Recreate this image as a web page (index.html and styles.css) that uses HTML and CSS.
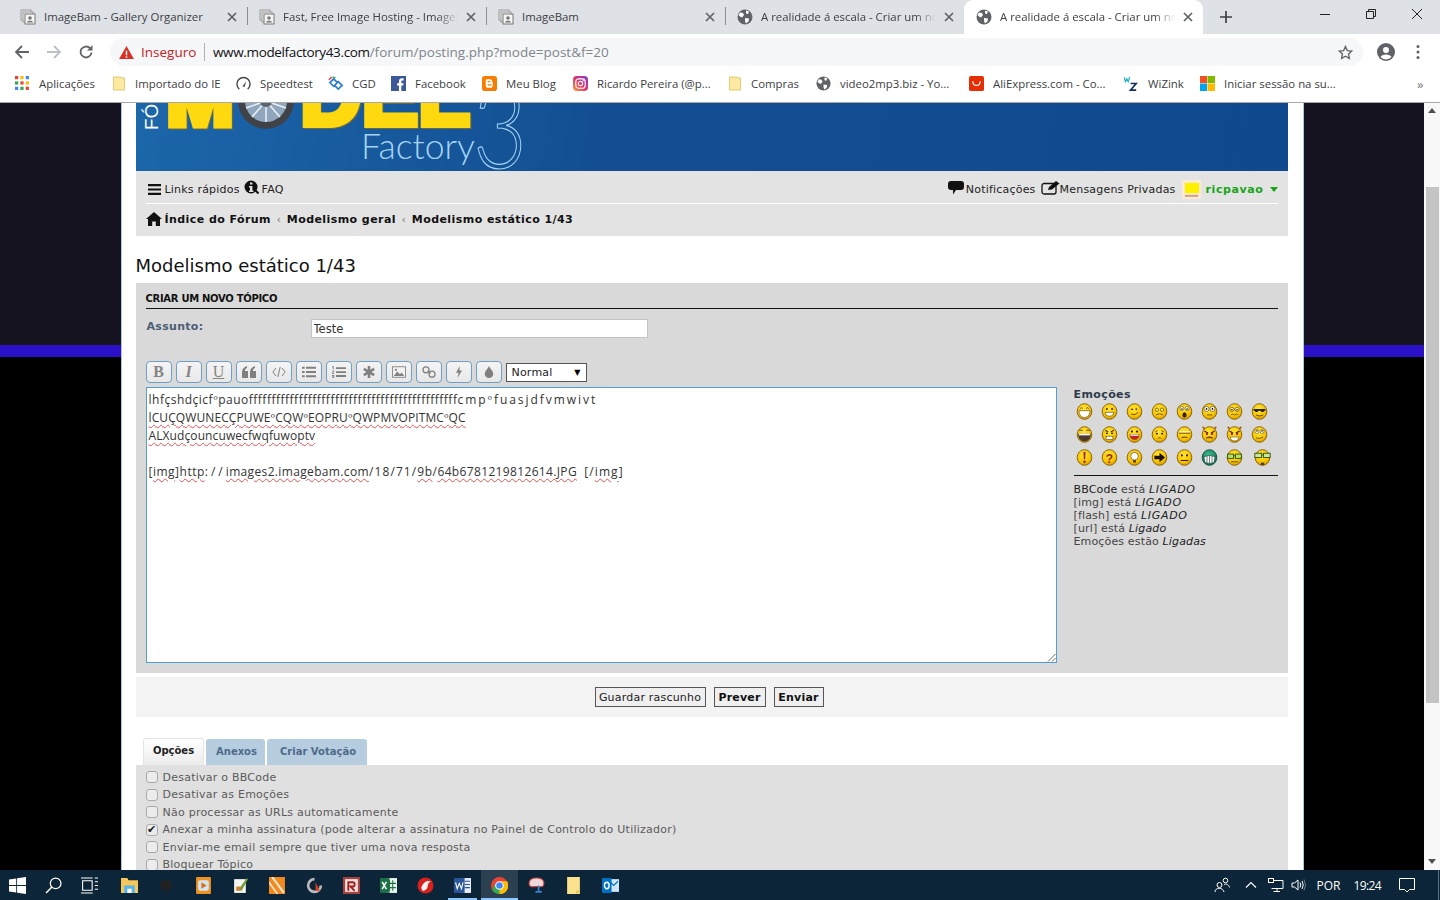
FILE: index.html
```html
<!DOCTYPE html>
<html lang="pt">
<head>
<meta charset="utf-8">
<title>Criar um novo tópico</title>
<link rel="stylesheet" href="styles.css">
</head>
<body>
<svg class="defs" width="0" height="0" aria-hidden="true">
  <defs>
    <radialGradient id="yel" cx="45%" cy="35%" r="70%">
      <stop offset="0" stop-color="#ffe83a"/><stop offset=".65" stop-color="#f8c400"/><stop offset="1" stop-color="#c98a00"/>
    </radialGradient>
    <radialGradient id="grn" cx="45%" cy="35%" r="70%">
      <stop offset="0" stop-color="#3fbf8a"/><stop offset="1" stop-color="#0c6a50"/>
    </radialGradient>
    <symbol id="f" viewBox="0 0 20 20"><ellipse cx="10" cy="10" rx="8.6" ry="9.2" fill="url(#yel)" stroke="#8a6200" stroke-width="1.1"/></symbol>
    <symbol id="globe" viewBox="0 0 16 16"><circle cx="8" cy="8" r="7.5" fill="#5f6368"/><path d="M3 3.500l3 .5 1 2-2 2.500-2-1L1.500 6zM9 1.500l3 1-1 2.500-2-.5zM8 9l4 .5-.5 3-2.500 2-1-2.500z" fill="#fff"/></symbol>
    <symbol id="docs" viewBox="0 0 16 16"><rect x="1" y="1" width="10" height="10" fill="#e8e8e8" stroke="#9a9a9a"/><rect x="3" y="3" width="10" height="10" fill="#eee" stroke="#9a9a9a"/><rect x="5" y="5" width="10" height="10" fill="#f6f6f6" stroke="#777"/><circle cx="10" cy="9" r="1.800" fill="#777"/><path d="M7 13.500c0-2.500 6-2.500 6 0z" fill="#777"/></symbol>
    <symbol id="x" viewBox="0 0 10 10"><path d="M1 1l8 8M9 1l-8 8" stroke="#5f6368" stroke-width="1.700" fill="none"/></symbol>
    <symbol id="folder" viewBox="0 0 13 15"><path d="M.5.500h8l1 1h3v13H.500z" fill="#fdeaa0" stroke="#e2c66a"/></symbol>
  </defs>
</svg>

<header class="chrome">
  <div class="tabstrip">
    <div class="tab"><svg class="fav"><use href="#docs"/></svg><span class="tab-title short">ImageBam - Gallery Organizer</span><svg class="tab-x"><use href="#x"/></svg></div>
    <div class="tab sep"><svg class="fav"><use href="#docs"/></svg><span class="tab-title">Fast, Free Image Hosting - ImageBam</span><svg class="tab-x"><use href="#x"/></svg></div>
    <div class="tab sep"><svg class="fav"><use href="#docs"/></svg><span class="tab-title short">ImageBam</span><svg class="tab-x"><use href="#x"/></svg></div>
    <div class="tab sep"><svg class="fav"><use href="#globe"/></svg><span class="tab-title">A realidade á escala - Criar um novo tópico</span><svg class="tab-x"><use href="#x"/></svg></div>
    <div class="tab active"><svg class="fav"><use href="#globe"/></svg><span class="tab-title">A realidade á escala - Criar um novo tópico</span><svg class="tab-x"><use href="#x"/></svg></div>
    <svg class="newtab" viewBox="0 0 12 12"><path d="M6 0v12M0 6h12" stroke="#3c4043" stroke-width="1.700"/></svg>
    <div class="winctl">
      <svg viewBox="0 0 12 12"><path d="M1 6.500h10" stroke="#222"/></svg>
      <svg viewBox="0 0 12 12"><path d="M1.500 3.500h7v7h-7zM3.500 3.500v-2h7v7h-2" fill="none" stroke="#222"/></svg>
      <svg viewBox="0 0 12 12"><path d="M1 1l10 10M11 1L1 11" stroke="#222" fill="none"/></svg>
    </div>
  </div>
  <div class="toolbar">
    <svg class="nav-ic" viewBox="0 0 16 16"><path d="M15 8H2M8 2L2 8l6 6" fill="none" stroke="#5f6368" stroke-width="1.800"/></svg>
    <svg class="nav-ic" viewBox="0 0 16 16"><path d="M1 8h13M8 2l6 6-6 6" fill="none" stroke="#bdc1c6" stroke-width="1.800"/></svg>
    <svg class="nav-ic" viewBox="0 0 16 16"><path d="M13.500 8.500A5.500 5.500 0 1 1 12 4.200" fill="none" stroke="#5f6368" stroke-width="1.800"/><path d="M14.500 1v5.500H9z" fill="#5f6368"/></svg>
    <div class="omnibox">
      <svg class="warn" viewBox="0 0 16 14"><path d="M8 0l8 14H0z" fill="#d93025"/><path d="M7.200 5h1.600v5H7.200zM7.200 11h1.600v1.600H7.200z" fill="#fff"/></svg>
      <span class="insecure">Inseguro</span>
      <span class="url"><span class="host">www.modelfactory43.com</span>/forum/posting.php?mode=post&amp;f=20</span>
      <svg class="star" viewBox="0 0 16 16"><path d="M8 1.500l2 4.400 4.700.5-3.500 3.200 1 4.700L8 11.900l-4.200 2.400 1-4.700L1.300 6.400 6 5.900z" fill="none" stroke="#5f6368" stroke-width="1.400"/></svg>
    </div>
    <svg class="profile" viewBox="0 0 18 18"><circle cx="9" cy="9" r="9" fill="#5f6368"/><circle cx="9" cy="7" r="3" fill="#fff"/><path d="M3.500 14c1-3.500 10-3.500 11 0a7.500 7.500 0 0 1-11 0z" fill="#fff"/></svg>
    <svg class="kebab" viewBox="0 0 4 16"><circle cx="2" cy="2.500" r="1.500" fill="#5f6368"/><circle cx="2" cy="8" r="1.500" fill="#5f6368"/><circle cx="2" cy="13.500" r="1.500" fill="#5f6368"/></svg>
  </div>
  <div class="bookmarks">
    <div class="bm"><svg viewBox="0 0 14 14"><g><rect width="3" height="3" fill="#ea4335"/><rect x="5" width="3" height="3" fill="#fbbc05"/><rect x="10" width="3" height="3" fill="#4285f4"/><rect y="5" width="3" height="3" fill="#34a853"/><rect x="5" y="5" width="3" height="3" fill="#ea4335"/><rect x="10" y="5" width="3" height="3" fill="#fbbc05"/><rect y="10" width="3" height="3" fill="#4285f4"/><rect x="5" y="10" width="3" height="3" fill="#34a853"/><rect x="10" y="10" width="3" height="3" fill="#ea4335"/></g></svg><span>Aplicações</span></div>
    <div class="bm"><svg class="bm-folder"><use href="#folder"/></svg><span>Importado do IE</span></div>
    <div class="bm"><svg viewBox="0 0 16 16"><path d="M3.500 14a7 7 0 1 1 9 0" fill="none" stroke="#444" stroke-width="1.500"/><path d="M7 11l4-5.500-2 6.500z" fill="#444"/></svg><span>Speedtest</span></div>
    <div class="bm"><svg viewBox="0 0 16 16"><path d="M2 7l4-4 4 4-4 4zM7 10l4-4 4 4-4 4z" fill="none" stroke="#2f7fc8" stroke-width="1.800"/><path d="M1 4l3-3" stroke="#e33" stroke-width="1.500"/><path d="M5 1l3 1" stroke="#2a6" stroke-width="1.500"/></svg><span>CGD</span></div>
    <div class="bm"><svg viewBox="0 0 16 16"><rect width="16" height="16" fill="#3b5998"/><path d="M11 16v-6h2l.4-2.400H11V6c0-.8.300-1.200 1.200-1.200h1.300V2.600C13 2.500 12.400 2.500 11.700 2.500 9.800 2.500 8.500 3.600 8.500 5.700v1.900h-2V10h2v6z" fill="#fff"/></svg><span>Facebook</span></div>
    <div class="bm"><svg viewBox="0 0 16 16"><rect width="16" height="16" rx="3" fill="#f57d00"/><path d="M5.500 3.500h3c1.500 0 2.500 1 2.500 2.500v1h.5v3c0 1.500-1 2.500-2.500 2.500H6.500C5 12.500 4 11.500 4 10V5c0-1 .5-1.500 1.500-1.500z" fill="#fff"/><path d="M6 6h3M6 9.500h4" stroke="#f57d00" stroke-width="1.200"/></svg><span>Meu Blog</span></div>
    <div class="bm"><svg viewBox="0 0 16 16"><defs><linearGradient id="ig" x1="0" y1="1" x2="1" y2="0"><stop offset="0" stop-color="#f9a13a"/><stop offset=".5" stop-color="#e1306c"/><stop offset="1" stop-color="#7a3fd0"/></linearGradient></defs><rect width="16" height="16" rx="4" fill="url(#ig)"/><rect x="3" y="3" width="10" height="10" rx="3" fill="none" stroke="#fff" stroke-width="1.200"/><circle cx="8" cy="8" r="2.300" fill="none" stroke="#fff" stroke-width="1.200"/><circle cx="11" cy="5" r=".7" fill="#fff"/></svg><span>Ricardo Pereira (@p...</span></div>
    <div class="bm"><svg class="bm-folder"><use href="#folder"/></svg><span>Compras</span></div>
    <div class="bm"><svg viewBox="0 0 16 16"><use href="#globe"/></svg><span>video2mp3.biz - Yo...</span></div>
    <div class="bm"><svg viewBox="0 0 16 16"><rect width="16" height="16" rx="2" fill="#e62e04"/><path d="M4 5.500c0 6 8 6 8 0" fill="none" stroke="#fff" stroke-width="1.300"/></svg><span>AliExpress.com - Co...</span></div>
    <div class="bm"><svg viewBox="0 0 16 16"><path d="M0 1l1.500 5L3 3l1.500 3L6 1" fill="none" stroke="#18b6c8" stroke-width="1.300"/><path d="M7 8h6l-6 7h6" fill="none" stroke="#14305c" stroke-width="1.800"/></svg><span>WiZink</span></div>
    <div class="bm"><svg viewBox="0 0 16 16"><rect width="7.500" height="7.500" fill="#f25022"/><rect x="8" width="8" height="7.500" fill="#7fba00"/><rect y="8" width="7.500" height="8" fill="#00a4ef"/><rect x="8" y="8" width="8" height="8" fill="#ffb900"/></svg><span>Iniciar sessão na su...</span></div>
    <div class="bm more">»</div>
  </div>
</header>

<div class="app">
  <main class="viewport">
    <div class="wrap">
      <div class="logo">
        <svg viewBox="0 0 1152 68" width="1152" height="68">
          <text class="logo-forum" transform="translate(22 27) rotate(-90)">FÓRUM</text>
          <text class="logo-model logo-m" x="31" y="21" textLength="66" lengthAdjust="spacingAndGlyphs">M</text>
          <circle cx="130" cy="-2" r="28" fill="#3f4348"/>
          <circle cx="130" cy="-2" r="21" fill="#8fa6bd"/>
          <g stroke="#e8eef4" stroke-width="1.600"><path d="M130 -2L130 19M130 -2L116 14M130 -2L144 14M130 -2L110 5M130 -2L150 5"/></g>
          <circle cx="130" cy="-2" r="6" fill="#5b6470"/>
          <text class="logo-model" x="164" y="22" textLength="170" lengthAdjust="spacingAndGlyphs">DEL</text>
          <text class="logo-three" x="337" y="65" textLength="54" lengthAdjust="spacingAndGlyphs">3</text>
          <text class="logo-factory" x="225" y="56" textLength="114" lengthAdjust="spacingAndGlyphs">Factory</text>
        </svg>
      </div>

      <nav class="navbar">
        <div class="nav-top">
          <div class="nav-group">
            <svg class="ico" viewBox="0 0 13 11"><path d="M0 0h13v2.200H0zM0 4.400h13v2.200H0zM0 8.800h13V11H0z" fill="#111"/></svg>
            <span class="nav-link">Links rápidos</span>
            <svg class="ico ico-info" viewBox="0 0 15 15"><circle cx="7" cy="7" r="6.500" fill="#111"/><path d="M6 2.500h2.400v2H6zM5 6h3.400v4.500h1V12H5v-1.500h1V7.500H5z" fill="#e2e2e2"/><path d="M11 10l3.500 3.500" stroke="#111" stroke-width="2"/></svg>
            <span class="nav-link">FAQ</span>
          </div>
          <div class="nav-group">
            <svg class="ico ico-bubble" viewBox="0 0 16 14"><path d="M3 0h10a3 3 0 0 1 3 3v3a3 3 0 0 1-3 3H8l-3 4.500V9H3a3 3 0 0 1-3-3V3a3 3 0 0 1 3-3z" fill="#111"/></svg>
            <span class="nav-link">Notificações</span>
            <svg class="ico ico-mail" viewBox="0 0 19 14"><rect x="1" y="2.500" width="14" height="10.500" rx="2" fill="none" stroke="#111" stroke-width="1.300"/><path d="M7 9l1-3 7-6 3.500 2.500-7.500 6z" fill="#111"/></svg>
            <span class="nav-link nav-pm">Mensagens Privadas</span>
            <svg class="avatar" viewBox="0 0 20 20"><rect width="20" height="20" fill="#f6ecd8"/><rect x="3" y="3" width="15" height="11" fill="#fff000"/><rect x="3" y="16" width="14" height="1.500" fill="#d98060"/></svg>
            <span class="username">ricpavao</span>
            <span class="caret"></span>
          </div>
        </div>
        <div class="crumbs">
          <svg class="ico ico-home" viewBox="0 0 16 14"><path d="M8 0l8 7h-2v7H9.800V9.500H6.200V14H2V7H0z" fill="#111"/></svg>
          <span>Índice do Fórum</span><i>‹</i><span>Modelismo geral</span><i>‹</i><span>Modelismo estático 1/43</span>
        </div>
      </nav>

      <h2 class="title">Modelismo estático 1/43</h2>

      <form class="panel">
        <h3 class="legend">CRIAR UM NOVO TÓPICO</h3>
        <div class="subject">
          <label class="subject-label" for="subj">Assunto:</label>
          <input class="subject-input" id="subj" type="text" value="Teste">
        </div>
        <div class="format">
          <button type="button" class="fb fb-b">B</button>
          <button type="button" class="fb fb-i">I</button>
          <button type="button" class="fb fb-u">U</button>
          <button type="button" class="fb"><svg viewBox="0 0 14 12"><path d="M0 6c0-3 2-5 5-6v2C3.500 2.500 3 3.500 3 5h3v7H0zM8 6c0-3 2-5 5-6v2c-1.500.5-2 1.500-2 3h3v7H8z" fill="#808080"/></svg></button>
          <button type="button" class="fb"><svg viewBox="0 0 14 10"><path d="M4 1L.8 5 4 9M10 1l3.200 4L10 9M8.200 0L5.800 10" fill="none" stroke="#808080" stroke-width="1"/></svg></button>
          <button type="button" class="fb"><svg viewBox="0 0 16 12"><path d="M0 0h3v2.200H0zM0 4.800h3V7H0zM0 9.700h3V12H0zM4.500 0H16v2.200H4.500zM4.500 4.800H16V7H4.500zM4.500 9.700H16V12H4.500z" fill="#808080"/></svg></button>
          <button type="button" class="fb"><svg viewBox="0 0 16 13"><path d="M0 0h2v3.500H1V1H0zM0 5h2.500v1L1 7.500h1.500V8.500H0v-1L1.500 6H0zM0 10h2.500v3H0v-1h1.500v-.3H.6v-.7h.9V11H0zM4.500 1H16v2.200H4.500zM4.500 5.500H16v2.200H4.500zM4.500 10H16v2.200H4.500z" fill="#808080"/></svg></button>
          <button type="button" class="fb"><svg viewBox="0 0 14 14"><path d="M5.500 0h3v4.400L12.300 2l1.500 2.600L10 7l3.800 2.400-1.500 2.600-3.800-2.400V14h-3V9.600L1.700 12 .2 9.400 4 7 .2 4.600 1.700 2l3.800 2.400z" fill="#808080"/></svg></button>
          <button type="button" class="fb"><svg viewBox="0 0 16 13"><rect x=".5" y=".5" width="15" height="12" fill="#f2f2f2" stroke="#808080"/><path d="M2 11l4-5 3 3 2-2 3 4z" fill="#808080"/><circle cx="4.500" cy="4" r="1.300" fill="#808080"/></svg></button>
          <button type="button" class="fb"><svg viewBox="0 0 16 14"><circle cx="4.500" cy="4.500" r="3.500" fill="none" stroke="#808080" stroke-width="1.500"/><circle cx="11.500" cy="9.500" r="3.500" fill="none" stroke="#808080" stroke-width="1.500"/><path d="M6 6.500l4 2" stroke="#808080" stroke-width="1.500"/></svg></button>
          <button type="button" class="fb"><svg viewBox="0 0 10 16"><path d="M6 0L1 9h3.500L3 16l6-10H5.500z" fill="#808080"/></svg></button>
          <button type="button" class="fb"><svg viewBox="0 0 10 14"><path d="M5 0c1 3 5 6 5 9a5 5 0 0 1-10 0c0-3 4-6 5-9z" fill="#808080"/></svg></button>
          <div class="sizebox"><span>Normal</span><span class="sizearrow">▼</span></div>
        </div>
        <div class="editor">
          <div class="msg">
            <p>lhfçshdçicfºpauoffffffffffffffffffffffffffffffffffffffffffffff<span class="tail">cmpºfuasjdfvmwivt</span></p>
            <p class="tight"><span class="sp">lCUÇQWUNECÇPUWEºCQWºEOPRUºQWPMVOPITMCºQC</span></p>
            <p class="tight"><span class="sp">ALXudçouncuwecfwqfuwoptv</span></p>
            <p>&nbsp;</p>
            <p>[<span class="sp">img</span>]<span class="sp">http</span><span class="wide">://</span><span class="sp host-sp">images2.imagebam.com</span><span class="path">/18/71/</span><span class="sp">9b</span>/<span class="sp host-sp">64b6781219812614.JPG</span>&nbsp;&nbsp;<span class="end">[/<span class="sp">img</span>]</span></p>
            <svg class="grip" viewBox="0 0 9 9"><path d="M8.500 1L1 8.500M8.500 5L5 8.500" stroke="#666" fill="none"/></svg>
          </div>
          <aside class="side">
            <div class="side-title">Emoções</div>
            <div class="smilies">
              <svg viewBox="0 0 20 20"><use href="#f"/><path d="M3.500 9h13c0 5-3 8-6.500 8S3.500 14 3.500 9z" fill="#fff" stroke="#5a3d00" stroke-width=".7"/><path d="M5 6.500q1.500-2 3 0M12 6.500q1.500-2 3 0" fill="none" stroke="#5a3d00"/></svg>
              <svg viewBox="0 0 20 20"><use href="#f"/><circle cx="7" cy="7" r="1.200" fill="#4a3000"/><circle cx="13" cy="7" r="1.200" fill="#4a3000"/><path d="M5 11h10c0 3-2 4.500-5 4.500S5 14 5 11z" fill="#fff" stroke="#5a3d00" stroke-width=".7"/></svg>
              <svg viewBox="0 0 20 20"><use href="#f"/><path d="M6 7.500h2.500M12 6v2.500" stroke="#4a3000" stroke-width="1.200"/><path d="M6 13q5 2.500 8-2" fill="none" stroke="#5a3d00"/></svg>
              <svg viewBox="0 0 20 20"><use href="#f"/><circle cx="7" cy="8" r="2" fill="#ffe860" stroke="#4a3000" stroke-width=".7"/><circle cx="13" cy="8" r="2" fill="#ffe860" stroke="#4a3000" stroke-width=".7"/><path d="M6 14q4-3 8 0" fill="none" stroke="#5a3d00"/></svg>
              <svg viewBox="0 0 20 20"><use href="#f"/><ellipse cx="7" cy="6.500" rx="2.200" ry="2.500" fill="#fff" stroke="#4a3000" stroke-width=".6"/><ellipse cx="13" cy="6.500" rx="2.200" ry="2.500" fill="#fff" stroke="#4a3000" stroke-width=".6"/><circle cx="7" cy="7" r=".9"/><circle cx="13" cy="7" r=".9"/><ellipse cx="10" cy="14" rx="2.500" ry="3" fill="#3c2000"/></svg>
              <svg viewBox="0 0 20 20"><use href="#f"/><circle cx="6.500" cy="7" r="3" fill="#fff" stroke="#4a3000" stroke-width=".7"/><circle cx="13.500" cy="7" r="3" fill="#fff" stroke="#4a3000" stroke-width=".7"/><circle cx="6.500" cy="7" r="1"/><circle cx="13.500" cy="7" r="1"/><path d="M7 14h6" stroke="#5a3d00"/></svg>
              <svg viewBox="0 0 20 20"><use href="#f"/><circle cx="7" cy="7.500" r="2.500" fill="#ffeb9a" stroke="#4a3000" stroke-width=".7"/><circle cx="13" cy="7.500" r="2.500" fill="#ffeb9a" stroke="#4a3000" stroke-width=".7"/><circle cx="7" cy="8" r=".8"/><circle cx="13" cy="8" r=".8"/><path d="M6 14l2-1 2 1 2-1 2 1" fill="none" stroke="#5a3d00" stroke-width=".9"/></svg>
              <svg viewBox="0 0 20 20"><use href="#f"/><path d="M3 7h14v2h-1.500l-1 1.500h-2L11 9H9l-1.500 1.500h-2l-1-1.500H3z" fill="#222"/><path d="M6 14q4 2.500 8 0" fill="none" stroke="#5a3d00" stroke-width="1.200"/></svg>

              <svg viewBox="0 0 20 20"><use href="#f"/><path d="M4 5.500q2-1.500 4 0M12 5.500q2-1.500 4 0" fill="none" stroke="#4a3000"/><path d="M2.500 9h15c0 6-3.500 9-7.500 9S2.500 15 2.500 9z" fill="#4a3a30"/><path d="M3.500 9h13v2h-13z" fill="#fff"/></svg>
              <svg viewBox="0 0 20 20"><use href="#f"/><path d="M5 5l3.500 2M15 5l-3.500 2" stroke="#4a3000" stroke-width="1.200"/><circle cx="7" cy="8.500" r="1"/><circle cx="13" cy="8.500" r="1"/><rect x="6" y="12" width="8" height="4" fill="#fff" stroke="#5a3d00" stroke-width=".7"/></svg>
              <svg viewBox="0 0 20 20"><use href="#f"/><circle cx="7" cy="6.500" r="1.300" fill="#3c2000"/><circle cx="13" cy="6.500" r="1.300" fill="#3c2000"/><path d="M4.500 10h11c0 4-2.500 6-5.500 6s-5.500-2-5.500-6z" fill="#c8202a" stroke="#5a3d00" stroke-width=".6"/><path d="M5 10h10v1.500H5z" fill="#fff"/></svg>
              <svg viewBox="0 0 20 20"><use href="#f"/><path d="M5 7l2.500-1.500M15 7l-2.500-1.500" stroke="#4a3000"/><circle cx="7" cy="9" r="1"/><circle cx="13" cy="9" r="1"/><path d="M8 14.500q2-1.500 4 0" fill="none" stroke="#5a3d00"/></svg>
              <svg viewBox="0 0 20 20"><use href="#f"/><path d="M3.500 7h13" stroke="#fff2b0" stroke-width="2"/><path d="M3.500 8.500h13" stroke="#7a5500" stroke-width="1.200"/><path d="M6.500 14q3.500-2 7 0" fill="none" stroke="#5a3d00" stroke-width="1.200"/></svg>
              <svg viewBox="0 0 20 20"><path d="M2 1l3.500 3.500M18 1l-3.500 3.500" stroke="#b05a10" stroke-width="2"/><use href="#f"/><path d="M4 6l4.500 2.500M16 6l-4.500 2.500" stroke="#3c2000" stroke-width="1.300"/><circle cx="7" cy="9.500" r="1.300" fill="#b01010"/><circle cx="13" cy="9.500" r="1.300" fill="#b01010"/><path d="M6 14.500q4-3 8 0" stroke="#5a3d00" stroke-width="1.300" fill="#c03020"/></svg>
              <svg viewBox="0 0 20 20"><path d="M2 1l3.500 3.500M18 1l-3.500 3.500" stroke="#b05a10" stroke-width="2"/><use href="#f"/><path d="M4 6l4.500 2.500M16 6l-4.500 2.500" stroke="#3c2000" stroke-width="1.300"/><circle cx="7" cy="9.500" r="1.300" fill="#b01010"/><circle cx="13" cy="9.500" r="1.300" fill="#b01010"/><path d="M5 13h10c0 3-2 4.500-5 4.500S5 16 5 13z" fill="#fff" stroke="#5a3d00" stroke-width=".6"/></svg>
              <svg viewBox="0 0 20 20"><use href="#f"/><circle cx="7" cy="6.500" r="2.300" fill="#fff" stroke="#4a3000" stroke-width=".6"/><circle cx="13" cy="6.500" r="2.300" fill="#fff" stroke="#4a3000" stroke-width=".6"/><circle cx="7" cy="6" r=".9"/><circle cx="13" cy="6" r=".9"/><path d="M6 14q4 2 8-1" fill="none" stroke="#5a3d00"/></svg>

              <svg viewBox="0 0 20 20"><use href="#f"/><path d="M8.800 3.500h2.400l-.4 8.500H9.200z" fill="#a02000"/><circle cx="10" cy="15" r="1.500" fill="#a02000"/></svg>
              <svg viewBox="0 0 20 20"><use href="#f"/><text class="sm-q" x="10" y="16" text-anchor="middle">?</text></svg>
              <svg viewBox="0 0 20 20"><use href="#f"/><circle cx="10" cy="8.500" r="4.500" fill="#fff" stroke="#4a3000" stroke-width=".7"/><rect x="8.500" y="13" width="3" height="3" fill="#4a3000"/></svg>
              <svg viewBox="0 0 20 20"><use href="#f"/><path d="M4 8h6V4.500l6.500 5.500-6.500 5.500V12H4z" fill="#1a1000"/></svg>
              <svg viewBox="0 0 20 20"><use href="#f"/><circle cx="7" cy="7.500" r="1.200" fill="#3c2000"/><circle cx="13" cy="7.500" r="1.200" fill="#3c2000"/><path d="M5.500 13.500h9" stroke="#3c2000" stroke-width="1.200"/></svg>
              <svg viewBox="0 0 20 20"><ellipse cx="10" cy="10" rx="8.600" ry="9.200" fill="url(#grn)" stroke="#0a4a3a"/><path d="M3.500 9q6.500-3 13 0l-1 7q-5.500 2-11 0z" fill="#fff" stroke="#063028" stroke-width=".7"/><path d="M7 8v9M10 8v9M13 8v9" stroke="#063028" stroke-width=".7"/></svg>
              <svg viewBox="0 0 20 20"><use href="#f"/><rect x="2" y="6" width="7" height="5" fill="#b6e36a" stroke="#2a4a00"/><rect x="11" y="6" width="7" height="5" fill="#b6e36a" stroke="#2a4a00"/><path d="M9 8h2" stroke="#2a4a00"/><path d="M6 15h8" stroke="#5a3d00"/></svg>
              <svg class="sm-last" viewBox="0 0 20 20"><use href="#f"/><rect x="1" y="5" width="8" height="5" fill="#c8e8a0" stroke="#2a4a00"/><rect x="11" y="5" width="8" height="5" fill="#c8e8a0" stroke="#2a4a00"/><path d="M9 7h2" stroke="#2a4a00"/><path d="M8 16h4v3H8z" fill="#5a4020"/></svg>
            </div>
            <div class="status">
              <div><span class="st-k">BBCode</span> está <em class="caps">LIGADO</em></div>
              <div>[img] está <em class="caps">LIGADO</em></div>
              <div>[flash] está <em class="caps">LIGADO</em></div>
              <div>[url] está <em>Ligado</em></div>
              <div>Emoções estão <em>Ligadas</em></div>
            </div>
          </aside>
        </div>
      </form>

      <div class="submit">
        <button type="button" class="btn btn-draft">Guardar rascunho</button>
        <button type="button" class="btn btn-strong btn-prev">Prever</button>
        <button type="button" class="btn btn-strong btn-send">Enviar</button>
      </div>

      <div class="tabs">
        <div class="ftab ftab-on">Opções</div>
        <div class="ftab ftab-a">Anexos</div>
        <div class="ftab ftab-v">Criar Votação</div>
      </div>
      <div class="options">
        <label class="opt"><input type="checkbox">Desativar o BBCode</label>
        <label class="opt"><input type="checkbox">Desativar as Emoções</label>
        <label class="opt"><input type="checkbox">Não processar as URLs automaticamente</label>
        <label class="opt"><input type="checkbox" checked>Anexar a minha assinatura (pode alterar a assinatura no Painel de Controlo do Utilizador)</label>
        <label class="opt"><input type="checkbox">Enviar-me email sempre que tiver uma nova resposta</label>
        <label class="opt"><input type="checkbox">Bloquear Tópico</label>
      </div>
    </div>
  </main>
  <div class="scrollbar">
    <span class="sb-up"></span>
    <div class="sb-thumb"></div>
    <span class="sb-down"></span>
  </div>
</div>

<footer class="taskbar">
  <div class="tb-left">
    <div class="tb-i tb-narrow"><svg viewBox="0 0 16 16"><path d="M0 2.300l6.800-1v6.300H0zM7.600 1.200L16 0v7.600H7.600zM0 8.400h6.800v6.300L0 13.700zM7.600 8.400H16V16l-8.400-1.200z" fill="#fff"/></svg></div>
    <div class="tb-i"><svg viewBox="0 0 16 16"><circle cx="10" cy="6" r="5" fill="none" stroke="#fff" stroke-width="1.200"/><path d="M6.500 9.500L1 15" stroke="#fff" stroke-width="1.400"/></svg></div>
    <div class="tb-i tb-narrow tb-gap"><svg viewBox="0 0 16 16"><path d="M1.500 3.500h9v9h-9zM0 1h11M0 15h11M13 1h3M13 4.500h3M13 8h3M13 11.500h3" fill="none" stroke="#fff"/></svg></div>
    <div class="tb-i"><svg viewBox="0 0 16 16"><path d="M0 1h6l1 2h9v12H0z" fill="#f4c85a"/><path d="M3 8h10v7H3z" fill="#5ab4e8"/><path d="M6 11h4v4H6z" fill="#fff"/></svg></div>
    <div class="tb-i"><svg viewBox="0 0 16 16"><path d="M3 2l3 2 2-2 2 2 3-1-1 4 2 2-3 1 0 4-3-2-2 2-1-3-3 0 1-4-2-2 3-1z" fill="#222"/></svg></div>
    <div class="tb-i"><svg viewBox="0 0 16 16"><rect x="1" y="0" width="14" height="16" rx="1" fill="#f09020"/><rect x="3" y="3" width="10" height="10" rx="2" fill="#cfe6f8"/><path d="M6 5l5 3-5 3z" fill="#e07010"/></svg></div>
    <div class="tb-i"><svg viewBox="0 0 16 16"><path d="M2 2h11v13H2z" fill="#f4f4f0"/><path d="M6 12L14 1l1 1-6 11z" fill="#6aa030"/><path d="M4 9h4v4H4z" fill="#d08030"/></svg></div>
    <div class="tb-i"><svg viewBox="0 0 16 16"><rect width="15" height="16" fill="#f08a20"/><path d="M3 0l11 15" stroke="#fbe6c8" stroke-width="2"/><path d="M0 5l8 11" stroke="#fbe6c8" stroke-width="1.500"/></svg></div>
    <div class="tb-i"><svg viewBox="0 0 16 16"><path d="M8 2a6 6 0 1 0 6 6" fill="none" stroke="#bbb" stroke-width="2.500"/><path d="M9 5l4 8H9z" fill="#e03a20"/></svg></div>
    <div class="tb-i"><svg viewBox="0 0 16 16"><rect width="16" height="16" fill="#a8403c"/><rect x="2" y="2" width="12" height="12" fill="#f0e0dc"/><path d="M5 13V5h4a2 2 0 0 1 0 4H7l4 4" fill="none" stroke="#a02020" stroke-width="1.800"/></svg></div>
    <div class="tb-i"><svg viewBox="0 0 16 16"><rect x="6" y="1" width="10" height="14" fill="#e8f4ec"/><path d="M9 3v10M12 3v10M7 6h8M7 10h8" stroke="#1e7145"/><rect y="1" width="9" height="14" fill="#1e7145"/><path d="M2 4.500l4 7M6 4.500l-4 7" stroke="#fff" stroke-width="1.400"/></svg></div>
    <div class="tb-i"><svg viewBox="0 0 16 16"><circle cx="8" cy="8" r="7.500" fill="#d8201c"/><path d="M4 10c2-6 6-7 9-6-2 1-3 3-3 5s-2 4-5 4z" fill="#f8f0f0"/></svg></div>
    <div class="tb-i tb-open"><svg viewBox="0 0 16 16"><rect x="6" y="1" width="10" height="14" fill="#e8eef8"/><path d="M10 4h5M10 7h5M10 10h5" stroke="#2b579a"/><rect y="1" width="10" height="14" fill="#2b579a"/><path d="M1.500 5l1.500 6 2-5 2 5 1.500-6" fill="none" stroke="#fff"/></svg></div>
    <div class="tb-i tb-active"><svg viewBox="0 0 16 16"><circle cx="8" cy="8" r="8" fill="#ea4335"/><path d="M8 8L14.900 12A8 8 0 0 1 1 12L4 6z" fill="#34a853"/><path d="M8 4h7.200A8 8 0 0 1 8 16z" fill="#fbbc05"/><circle cx="8" cy="8" r="3.600" fill="#4285f4" stroke="#fff"/></svg></div>
    <div class="tb-i"><svg viewBox="0 0 16 16"><path d="M1 6c0-4 4-5 7-5s7 1 7 5-4 3-7 3-7 1-7-3z" fill="#f0d8d8" stroke="#c84040"/><path d="M10 8v6M7 14h6" stroke="#3a80d0" stroke-width="1.600"/></svg></div>
    <div class="tb-i"><svg viewBox="0 0 16 16"><path d="M2 0h9v0h3v16H2z" fill="#fbe38e"/><path d="M10 13h4l-3 3z" fill="#e0c050"/></svg></div>
    <div class="tb-i"><svg viewBox="0 0 16 16"><rect x="6" y="2" width="10" height="12" fill="#cfe6f8"/><path d="M7 4l4 4 4-4" fill="none" stroke="#0072c6"/><rect y="1" width="9" height="14" fill="#0072c6"/><ellipse cx="4.500" cy="8" rx="2.200" ry="3" fill="none" stroke="#fff" stroke-width="1.300"/></svg></div>
  </div>
  <div class="tray">
    <svg class="tr-people" viewBox="0 0 16 16"><circle cx="5.500" cy="8" r="2.500" fill="none" stroke="#fff"/><path d="M1 15c0-5 8-5 9 0" fill="none" stroke="#fff"/><circle cx="11.500" cy="3.500" r="2.300" fill="none" stroke="#fff"/><path d="M10 7.500c2-1 5 0 5.500 3" fill="none" stroke="#fff"/></svg>
    <svg class="tr-caret" viewBox="0 0 12 8"><path d="M1 6.500l5-5 5 5" fill="none" stroke="#fff" stroke-width="1.100"/></svg>
    <svg class="tr-net" viewBox="0 0 16 14"><path d="M3.500 2.500H15v8H3.500M9 10.500v3M5.500 13.500H12" fill="none" stroke="#fff"/><rect x=".5" y=".5" width="5" height="4" fill="#0d2436" stroke="#fff"/></svg>
    <svg class="tr-vol" viewBox="0 0 16 14"><path d="M1 5h2.500L7 2v10L3.500 9H1z" fill="none" stroke="#fff"/><path d="M9 4.500q1.500 2.500 0 5M11 3q2.500 4 0 8" fill="none" stroke="#fff"/><path d="M13 1.500q3 5.500 0 11" fill="none" stroke="#6a7a88"/></svg>
    <span class="tr-lang">POR</span>
    <span class="tr-time">19:24</span>
    <svg class="tr-note" viewBox="0 0 16 16"><path d="M.5 1.500h15v11h-5L8 15l-2.500-2.500h-5z" fill="none" stroke="#fff"/></svg>
    <span class="tr-show"></span>
  </div>
</footer>
</body>
</html>
```

FILE: styles.css
```css
* { box-sizing: border-box; }
html, body { margin: 0; height: 100%; overflow: hidden; }
body {
  display: flex;
  flex-direction: column;
  width: 1440px;
  height: 900px;
  font-family: "DejaVu Sans", sans-serif;
  font-size: 11px;
  color: #333;
  background: #000;
}
.defs { position: absolute; }

/* ---------- browser chrome ---------- */
.chrome { flex: none; height: 103px; background: #fff; border-bottom: 1px solid #a8a8a8; font-family: "Open Sans", sans-serif; }
.tabstrip { height: 34px; background: #dee1e6; display: flex; padding-left: 8px; align-items: stretch; }
.tab { width: 239px; display: flex; align-items: center; padding: 0 9px 1px 12px; position: relative; color: #3c4043; font-size: 11.400px; }
.tab.sep::before { content: ""; position: absolute; left: 0; top: 7px; bottom: 9px; width: 1px; background: #8a8d91; }
.tab.active { background: #fff; border-radius: 9px 9px 0 0; }
.fav { width: 16px; height: 16px; flex: none; }
.tab-title { margin-left: 8px; width: 175px; white-space: nowrap; overflow: hidden; -webkit-mask-image: linear-gradient(to right, #000 88%, transparent); mask-image: linear-gradient(to right, #000 88%, transparent); flex: none; }
.tab-title.short { -webkit-mask-image: none; mask-image: none; }
.tab-x { width: 10px; height: 10px; margin-left: auto; margin-right: 1px; flex: none; }
.newtab { width: 12px; height: 12px; align-self: center; margin: -1px 0 0 17px; flex: none; }
.winctl { margin-left: auto; display: flex; align-items: flex-start; gap: 34px; padding: 8px 17px 0 0; }
.winctl svg { width: 12px; height: 12px; }

.toolbar { height: 36px; display: flex; align-items: center; padding-left: 14px; }
.nav-ic { width: 16px; height: 16px; margin-right: 16px; flex: none; }
.omnibox { width: 1253px; height: 28px; background: #f6f7f8; border-radius: 14px; display: flex; align-items: center; padding-left: 9px; font-size: 13.500px; flex: none; margin-left: 0; }
.warn { width: 15px; height: 13px; flex: none; }
.insecure { color: #c5221f; margin-left: 7px; padding-right: 8px; border-right: 1px solid #b0b0b0; line-height: 18px; width: 64px; }
.url { color: #80868b; margin-left: 8px; white-space: nowrap; }
.host { color: #111; letter-spacing: -.36px; }
.star { width: 15px; height: 15px; margin-left: auto; margin-right: 10px; }
.profile { width: 18px; height: 18px; margin-left: 14px; flex: none; }
.kebab { width: 4px; height: 16px; margin-left: 21px; flex: none; }

.bookmarks {
  height: 32px;
  display: grid;
  grid-template-columns: 98px 123px 92px 63px 91px 91px 156px 87px 153px 155px 76px 217px 1fr;
  padding: 0 0 5px 15px;
  align-items: center;
  font-size: 11.400px;
  color: #3c4043;
}
.bm { display: flex; align-items: center; gap: 9px; white-space: nowrap; overflow: hidden; }
.bm svg { width: 15px; height: 15px; flex: none; }
.bm .bm-folder { width: 12px; height: 15px; margin-right: 1px; }
.more { color: #777; font-size: 13px; }

/* ---------- page ---------- */
.app { flex: none; height: 767px; display: flex; }
.viewport {
  width: 1424px;
  height: 767px;
  overflow: hidden;
  background: linear-gradient(#15131f 0 242px, #2a10c6 242px 254px, #000 254px);
}
.wrap {
  width: 1183px;
  margin: 0 auto;
  background: #fff;
  border: 0 solid #a9c9de;
  border-width: 0 1px;
  padding: 0 15px 40px 14px;
}
.logo { height: 68px; background: linear-gradient(100deg, #1c66aa, #134e92 40%, #104a8e); overflow: hidden; }
.logo svg { display: block; }
.logo-forum { font: 400 19px "Liberation Sans", sans-serif; fill: #fff; }
.logo-model { font: 700 86px "Liberation Sans", sans-serif; fill: #ffd90f; stroke: #ffd90f; stroke-width: 6px; filter: drop-shadow(1px 1px 0 #6a6a40); }
.logo-m { stroke-width: 9px; }
.logo-factory { font: 300 36px "Lato", sans-serif; fill: #a3d4f7; }
.logo-three { font: 300 115px "Lato", sans-serif; fill: none; stroke: #a3d4f7; stroke-width: 1.200px; }

.navbar { height: 65px; background: #e3e3e3; padding: 0 10px; color: #222; }
.nav-top { height: 33px; border-bottom: 1px solid #fff; display: flex; justify-content: space-between; align-items: center; padding-top: 4px; }
.nav-group { display: flex; align-items: center; }
.nav-link { letter-spacing: .2px; }
.ico { display: block; flex: none; }
.nav-top .ico { width: 13px; height: 11px; margin: 0 4px 0 2px; }
.nav-top .ico-info { width: 15px; height: 15px; margin: -3px 3px 0 4px; }
.nav-top .ico-bubble { width: 16px; height: 14px; margin: -3px 2px 0 0; }
.nav-top .ico-mail { width: 19px; height: 14px; margin: -2px 0 0 5px; }
.nav-pm { margin-right: 6px; }
.avatar { width: 19px; height: 19px; margin-right: 5px; }
.username { color: #16a516; font-weight: 700; letter-spacing: .6px; }
.caret { width: 0; height: 0; border: 4px solid transparent; border-top: 5px solid #16a516; border-bottom: 0; margin-left: 6px; }
.crumbs { display: flex; align-items: center; height: 31px; font-weight: 700; color: #111; letter-spacing: .43px; }
.ico-home { width: 16px; height: 14px; margin-right: 3px; margin-top: -2px; }
.crumbs i { font-style: normal; font-weight: 400; color: #777; margin: 0 5.500px; }

.title { margin: 0; height: 47px; padding-top: 18px; font-size: 18px; font-weight: 400; line-height: 24px; color: #111; }

.panel { margin: 0; height: 390px; background: #d9d9d9; padding: 10px; }
.legend { margin: 0; height: 16px; border-bottom: 1px solid #111; font-size: 10px; font-weight: 700; line-height: 12.500px; letter-spacing: -.3px; color: #111; }
.subject { display: flex; margin-top: 10px; }
.subject-label { width: 165px; padding: 1px 0 0 1px; font-weight: 700; color: #4c5d77; letter-spacing: .3px; line-height: 14px; }
.subject-input { width: 337px; height: 19px; padding: 1px 2px; border: 1px solid #c4c4c4; background: #fff; font: 11.500px "DejaVu Sans", sans-serif; color: #333; outline: 0; }
.format { display: flex; align-items: center; gap: 4px; margin-top: 23px; height: 22px; }
.fb { width: 26px; height: 22px; padding: 0; border: 1px solid #6e9fc6; border-radius: 4px; background: linear-gradient(#f4f4f4, #e8e8e8); display: flex; align-items: center; justify-content: center; color: #858585; font: 700 16px "Liberation Serif", serif; flex: none; }
.fb svg { width: 14px; height: 12px; display: block; }
.fb-i { font-style: italic; }
.fb-u { text-decoration: underline; font-weight: 400; }
.sizebox { width: 81px; height: 19px; border: 1px solid #555; background: #fff; display: flex; align-items: center; justify-content: space-between; padding: 0 5px; color: #222; letter-spacing: .2px; }
.sizearrow { font-size: 8px; color: #000; }

.editor { display: flex; margin-top: 4px; }
.msg { position: relative; width: 911px; height: 276px; flex: none; background: #fff; border: 1px solid #4f9fd0; padding: 3px 2px 2px; font: 12px/18px "Open Sans", sans-serif; color: #333; letter-spacing: .5px; }
.msg p { margin: 0; white-space: nowrap; }
.msg .tight { letter-spacing: .1px; }
.tail { letter-spacing: 1.950px; }
.wide { letter-spacing: 3px; }
.host-sp { letter-spacing: .35px; }
.path { letter-spacing: 1.100px; }
.end { letter-spacing: 1.100px; }
.sp { text-decoration: underline wavy #e85050 1px; text-underline-offset: 2px; }
.grip { position: absolute; right: 0; bottom: 0; width: 9px; height: 9px; }
.side { margin-left: 17px; width: 204px; flex: none; }
.side-title { font-weight: 700; color: #2f3a4c; letter-spacing: .4px; line-height: 15px; }
.smilies { display: grid; grid-template-columns: repeat(8, 25px); grid-auto-rows: 23px; padding-left: 2px; padding-bottom: 4px; border-bottom: 1px solid #111; align-items: start; }
.smilies svg { width: 17px; height: 19px; display: block; overflow: visible; }
.smilies .sm-last { margin-left: 3px; }
.sm-q { font: 700 14px "Liberation Sans", sans-serif; fill: #a02000; }
.status { padding-top: 7px; line-height: 13px; color: #444; letter-spacing: .15px; }
.st-k { color: #222; }
.status em { color: #222; }
.status .caps { letter-spacing: .7px; }

.submit { margin-top: 4px; height: 40px; background: #f3f3f3; display: flex; align-items: center; justify-content: center; gap: 8px; padding-right: 5px; }
.btn { height: 20px; padding: 0; border: 1px solid #555; background: #efefef; font: 11px "DejaVu Sans", sans-serif; letter-spacing: .2px; color: #222; }
.btn-draft { width: 111px; }
.btn-strong { font-weight: 700; color: #111; }
.btn-prev { width: 52px; }
.btn-send { width: 50px; }

.tabs { margin-top: 21px; height: 27px; padding-left: 7px; display: flex; align-items: flex-end; gap: 2px; font-size: 10px; font-weight: 700; }
.ftab { border-radius: 3px 3px 0 0; display: flex; align-items: center; justify-content: center; height: 26px; padding: 0 0 2px 3px; background: #b6cde0; color: #4f6a8a; }
.ftab-on { width: 61px; height: 27px; padding: 0 0 4px 1px; background: linear-gradient(#fff, #ececec); border: 1px solid #e4e4e4; border-bottom: 0; color: #222; }
.ftab-a { width: 59px; }
.ftab-v { width: 100px; }
.options { background: #e0e0e0; padding: 3.500px 10px 10px; height: 120px; color: #5a5a5a; letter-spacing: .24px; }
.opt { display: flex; align-items: center; height: 17.500px; }
.opt input { appearance: none; -webkit-appearance: none; width: 12px; height: 12px; margin: 0 5px 0 0; border: 1px solid #aaa; border-radius: 3px; background: #ececec; position: relative; flex: none; }
.opt input:checked::after { content: "✔"; position: absolute; left: 0; top: -3px; font-size: 11px; line-height: 14px; color: #222; }

.scrollbar { width: 16px; height: 767px; background: #f8f8f8; display: flex; flex-direction: column; align-items: center; position: relative; }
.sb-up { width: 0; height: 0; margin-top: 5px; border: 4px solid transparent; border-bottom: 5px solid #505050; border-top: 0; }
.sb-thumb { width: 13px; height: 516px; background: #c4c4c4; margin-top: 74px; }
.sb-down { width: 0; height: 0; margin-top: 156px; border: 4px solid transparent; border-top: 5px solid #505050; border-bottom: 0; }

/* ---------- taskbar ---------- */
.taskbar { flex: none; height: 30px; background: #0d2538; display: flex; justify-content: space-between; color: #fff; }
.tb-left { display: flex; }
.tb-i { width: 37px; height: 30px; display: flex; align-items: center; justify-content: center; position: relative; flex: none; }
.tb-i svg { width: 17px; height: 17px; display: block; }
.tb-narrow { width: 35px; }
.tb-gap { margin-right: 4px; }
.tb-active { background: #2b4152; }
.tb-active::after, .tb-open::after { content: ""; position: absolute; left: 0; right: 0; bottom: 0; height: 2px; background: #8cc8ff; }
.tb-open::after { left: 4px; right: 4px; }
.tray { display: flex; align-items: center; font: 12px "Open Sans", sans-serif; }
.tray svg { display: block; flex: none; }
.tr-people { width: 16px; height: 16px; margin-right: 15px; }
.tr-caret { width: 12px; height: 8px; margin-right: 11px; }
.tr-net { width: 16px; height: 14px; margin-right: 7px; }
.tr-vol { width: 16px; height: 14px; margin-right: 9px; }
.tr-lang { margin-right: 13px; }
.tr-time { margin-right: 18px; letter-spacing: -.6px; }
.tr-note { width: 16px; height: 16px; margin-right: 23px; }
.tr-show { width: 1px; height: 30px; background: #5a7080; margin-right: 1px; }
```
